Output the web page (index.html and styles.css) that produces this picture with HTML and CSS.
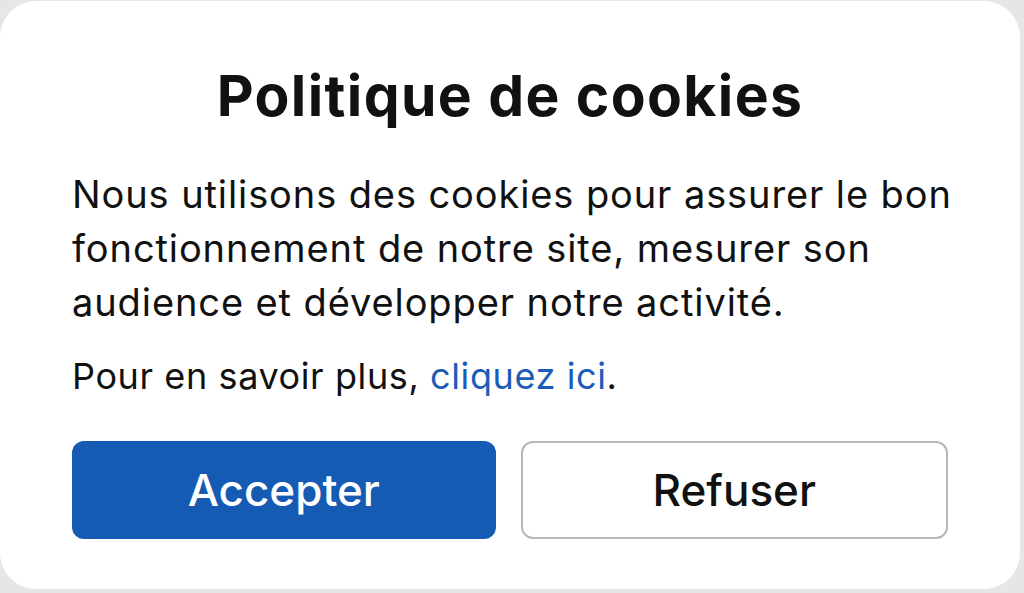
FILE: index.html
```html
<!DOCTYPE html>
<html lang="fr">
<head>
<meta charset="utf-8">
<title>Politique de cookies</title>
<link rel="stylesheet" href="styles.css">
</head>
<body>
<div class="card">
  <h1 class="title">Politique de cookies</h1>
  <p class="text">Nous utilisons des cookies pour assurer le bon fonctionnement de notre site, mesurer son audience et développer notre activité.</p>
  <p class="more">Pour en savoir plus, <a class="link" href="#">cliquez ici</a>.</p>
  <div class="actions">
    <button class="btn btn-primary">Accepter</button>
    <button class="btn btn-secondary">Refuser</button>
  </div>
</div>
</body>
</html>
```
FILE: styles.css
```css
html, body {
  margin: 0;
  padding: 0;
  height: 100%;
}
body {
  background: #e6e6e6;
  font-family: Inter, "Noto Sans", sans-serif;
  color: #111;
  overflow: hidden;
}
.card {
  box-sizing: border-box;
  width: 1020px;
  height: 588px;
  margin-top: 1px;
  background: #fff;
  border-radius: 36px;
  padding: 62px 72px 0 72px;
}
.title {
  margin: 0;
  text-align: center;
  font-size: 57px;
  font-weight: 700;
  line-height: 66px;
  letter-spacing: 1.4px;
}
.text {
  margin: 38px -14px 0 0;
  font-size: 38px;
  line-height: 54px;
  font-weight: 400;
  letter-spacing: 0.9px;
}
.more {
  margin: 20px 0 0 0;
  font-size: 36px;
  line-height: 54px;
  letter-spacing: 0.6px;
}
.link {
  color: #1c5cb8;
  text-decoration: none;
}
.actions {
  display: flex;
  gap: 25px;
  margin-top: 38px;
}
.btn {
  flex: 1;
  height: 98px;
  border-radius: 12px;
  font-family: Inter, "Noto Sans", sans-serif;
  font-size: 44px;
  font-weight: 500;
  cursor: pointer;
}
.btn-primary {
  background: #155bb3;
  color: #fff;
  border: none;
}
.btn-secondary {
  background: #fff;
  color: #111;
  border: 2px solid #b8b8b8;
}
```
